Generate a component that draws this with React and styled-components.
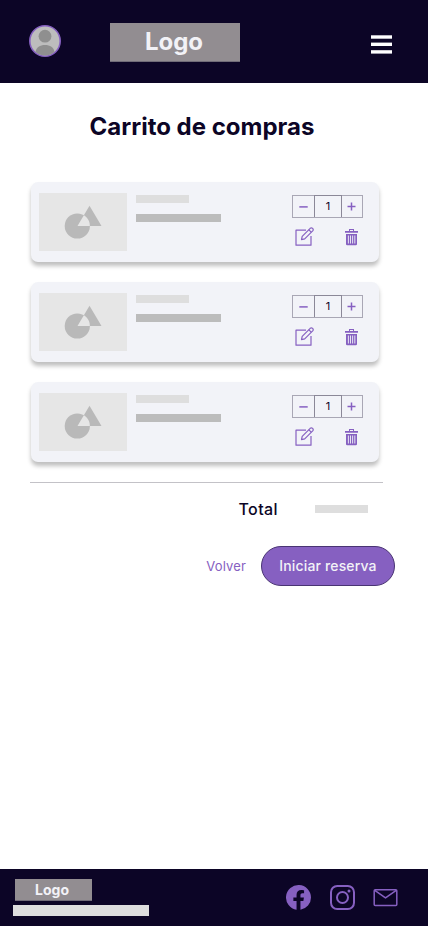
import React from "react";
import styled, { createGlobalStyle } from "styled-components";

const ink = "#0c0526";
const violet = "#8660c1";

const GlobalStyle = createGlobalStyle`
  *, *::before, *::after { box-sizing: border-box; }
  body { margin: 0; background: #fff; font-family: Inter, "Liberation Sans", sans-serif; }
  button { font-family: inherit; cursor: pointer; }
  svg { display: block; }
`;

const Page = styled.div`
  width: 428px;
  height: 926px;
  display: flex;
  flex-direction: column;
  background: #fff;
  color: ${ink};
  overflow: hidden;
`;

const Header = styled.header`
  height: 83px;
  flex: none;
  display: flex;
  align-items: flex-start;
  background: ${ink};
`;

const Avatar = styled.div`
  width: 32px;
  height: 32px;
  margin: 25px 49px 0 29px;
`;

const Logo = styled.div`
  width: ${(p) => (p.$small ? 77 : 130)}px;
  height: ${(p) => (p.$small ? 22 : 39)}px;
  margin: ${(p) => (p.$small ? "0 0 4px 2px" : "23px 131px 0 0")};
  padding-right: ${(p) => (p.$small ? 3 : 2)}px;
  display: flex;
  align-items: center;
  justify-content: center;
  background: #928d91;
  border-bottom: 1px solid #716c78;
  color: #f2f2f7;
  font-size: ${(p) => (p.$small ? 14 : 24)}px;
  line-height: 1;
  font-weight: 700;
`;

const MenuButton = styled.button`
  width: 21px;
  height: 19px;
  margin: 35px 0 0;
  padding: 0;
  border: 0;
  background: none;
`;

const Title = styled.h1`
  margin: 28px 0 40px;
  padding-right: 24px;
  height: 31px;
  font-size: 24px;
  line-height: 31px;
  font-weight: 700;
  text-align: center;
`;

const Main = styled.main`
  flex: 1;
`;

const CartList = styled.section`
  display: flex;
  flex-direction: column;
  gap: 20px;
  margin: 0 49px 20px 31px;
`;

const Card = styled.article`
  height: 80px;
  display: flex;
  align-items: flex-start;
  padding: 11px 16px 0 8px;
  border-radius: 7px;
  background: #f2f3f8;
  box-shadow: 0 4px 4px rgba(0, 0, 0, 0.25);
`;

const Thumbnail = styled.div`
  width: 88px;
  height: 58px;
  background: #e6e6e6;
`;

const Details = styled.div`
  flex: 1;
  display: flex;
  flex-direction: column;
  gap: 11px;
  padding: 2px 0 0 9px;
`;

const Bar = styled.div`
  width: ${(p) => p.$width}px;
  height: ${(p) => p.$height || 8}px;
  background: ${(p) => (p.$dark ? "#bcbcbc" : "#dedede")};
`;

const Actions = styled.div`
  width: 71px;
  padding-top: 2px;
`;

const Stepper = styled.div`
  height: 23px;
  display: grid;
  grid-template-columns: 22px 28px 21px;
  border: solid #a9a7b5;
  border-width: 1px 0;
`;

const StepButton = styled.button`
  display: flex;
  align-items: center;
  justify-content: center;
  padding: ${(p) => (p.$end ? "0 1px 1px 0" : "0")};
  border: solid #a9a7b5;
  border-width: ${(p) => (p.$end ? "0 1px 0 0" : "0 0 0 1px")};
  background: none;
`;

const Quantity = styled.output`
  margin-top: -1px;
  display: flex;
  align-items: center;
  justify-content: center;
  border: solid #8b8898;
  border-width: 1px 1px 0;
  font-size: 11px;
  line-height: 1;
`;

const ItemTools = styled.div`
  display: flex;
  justify-content: space-between;
  padding: 9px 5px 0 3px;
`;

const ToolButton = styled.button`
  padding: ${(p) => p.$top || 0}px 0 0;
  border: 0;
  background: none;
  display: flex;
  align-items: flex-start;
`;

const TotalRow = styled.div`
  display: flex;
  align-items: center;
  justify-content: flex-end;
  gap: 37px;
  width: 353px;
  height: 54px;
  margin-left: 30px;
  padding: 0 15px 2px 0;
  border-top: 1px solid #c3c2c7;
  font-size: 16px;
  font-weight: 450;
  letter-spacing: 0.4px;
`;

const Buttons = styled.div`
  display: flex;
  align-items: center;
  justify-content: flex-end;
  gap: 15px;
  padding: 10px 33px 0 0;
`;

const BackButton = styled.button`
  padding: 0;
  border: 0;
  background: none;
  color: ${violet};
  font-size: 13px;
  letter-spacing: 0.15px;
`;

const PrimaryButton = styled.button`
  width: 134px;
  height: 40px;
  padding: 0 0 1px;
  border: 1px solid #493473;
  border-radius: 20px;
  background: ${violet};
  color: #f2f2f7;
  font-size: 14px;
  font-weight: 450;
  letter-spacing: 0.15px;
`;

const Footer = styled.footer`
  height: 57px;
  flex: none;
  display: flex;
  justify-content: space-between;
  padding: 10px 30px 0 13px;
  background: ${ink};
`;

const Social = styled.div`
  display: flex;
  align-items: flex-start;
  padding-top: 6px;
  gap: 18px;
`;

const AvatarIcon = () => (
  <svg width="32" height="32" viewBox="0 0 32 32">
    <defs>
      <clipPath id="avatarClip"><circle cx="16" cy="16" r="14.5" /></clipPath>
    </defs>
    <circle cx="16" cy="16" r="15.2" fill="#bdbdbd" stroke={violet} strokeWidth="1.6" />
    <g fill="#8f8f8f" clipPath="url(#avatarClip)">
      <circle cx="16" cy="11.2" r="6.4" />
      <path d="M6.5 27C7 22.5 11 20 16 20s9 2.500 9.500 7l-3 5h-13z" />
    </g>
  </svg>
);

const MenuIcon = () => (
  <svg width="21" height="19" viewBox="0 0 21 19" fill="#fff">
    <rect y="0.300" width="21" height="3.400" />
    <rect y="7.600" width="21" height="3.400" />
    <rect y="15.200" width="21" height="3.400" />
  </svg>
);

const ShapesIcon = () => (
  <svg width="88" height="58" viewBox="0 0 88 58">
    <defs>
      <clipPath id="discClip"><circle cx="38.300" cy="33" r="12.600" /></clipPath>
    </defs>
    <circle cx="38.300" cy="33" r="12.600" fill="#b9b9b9" />
    <path d="M50.500 12.800L62.500 33H38.500z" fill="#b9b9b9" />
    <path d="M50.500 12.800L62.500 33H38.500z" fill="#e6e6e6" clipPath="url(#discClip)" />
  </svg>
);

const StepIcon = ({ plus }) => (
  <svg width="9" height="9" viewBox="0 0 9 9" stroke={violet} strokeWidth="1.500">
    <path d={plus ? "M0.500 4.500h8M4.500 0.500v8" : "M0.300 4.900h8.400"} />
  </svg>
);

const EditIcon = () => (
  <svg width="20" height="20" viewBox="0 0 20 20" fill="none" stroke={violet} strokeWidth="1.200" strokeLinejoin="round">
    <path d="M11 3.200H1v15h15V9" />
    <path d="M6.500 12.600l.700-3.300 8-8q1.200-1.100 2.400.100t.100 2.400l-8 8z" />
    <path d="M13.700 2.700l2.500 2.500" />
  </svg>
);

const TrashIcon = () => (
  <svg width="13" height="17" viewBox="0 0 13 17" fill={violet}>
    <path d="M4 2V0h5v2h4v1.800H0V2zm1 0h3V1H5z" />
    <path fillRule="evenodd" d="M1 5h11v10q0 1.200-1.200 1.200H2.200Q1 16.200 1 15zm1.900 1.600v7.800h.900V6.600zm2.100 0v7.800h.900V6.600zm2.200 0v7.800h.900V6.600zm2.200 0v7.800h.900V6.600z" />
  </svg>
);

const FacebookIcon = () => (
  <svg width="25" height="25" viewBox="0 0 25 25">
    <path fill={violet} d="M25 12.500a12.500 12.500 0 1 0-14.450 12.350v-8.740H7.370V12.500h3.180V9.750c0-3.130 1.860-4.870 4.720-4.870 1.370 0 2.800.250 2.800.250v3.070h-1.580c-1.550 0-2.040.970-2.040 1.960v2.340h3.470l-.560 3.610h-2.910v8.740A12.500 12.500 0 0 0 25 12.500z" />
  </svg>
);

const InstagramIcon = () => (
  <svg width="26" height="25" viewBox="0 0 26 25" fill="none" stroke={violet} strokeWidth="2">
    <rect x="2" y="1" width="23" height="23" rx="6.200" />
    <circle cx="13.500" cy="12.500" r="5.500" />
    <circle cx="20" cy="6" r="1.500" fill={violet} stroke="none" />
  </svg>
);

const MailIcon = () => (
  <svg width="25" height="25" viewBox="0 0 25 25" fill="none" stroke={violet} strokeWidth="1.500" strokeLinejoin="round">
    <rect x="1.200" y="4.800" width="22.600" height="15.800" rx="1" />
    <path d="M1.800 5.300l10.700 7.600 10.700-7.600" />
  </svg>
);

const items = [1, 2, 3];

function CartItem() {
  return (
    <Card>
      <Thumbnail><ShapesIcon /></Thumbnail>
      <Details>
        <Bar $width={53} />
        <Bar $width={85} $dark />
      </Details>
      <Actions>
        <Stepper>
          <StepButton aria-label="Restar"><StepIcon /></StepButton>
          <Quantity>1</Quantity>
          <StepButton $end aria-label="Sumar"><StepIcon plus /></StepButton>
        </Stepper>
        <ItemTools>
          <ToolButton aria-label="Editar"><EditIcon /></ToolButton>
          <ToolButton $top={2} aria-label="Eliminar"><TrashIcon /></ToolButton>
        </ItemTools>
      </Actions>
    </Card>
  );
}

export default function App() {
  return (
    <>
      <GlobalStyle />
      <Page>
        <Header>
          <Avatar><AvatarIcon /></Avatar>
          <Logo>Logo</Logo>
          <MenuButton aria-label="Menú"><MenuIcon /></MenuButton>
        </Header>
        <Main>
          <Title>Carrito de compras</Title>
          <CartList>
            {items.map((id) => <CartItem key={id} />)}
          </CartList>
          <TotalRow>
            <span>Total</span>
            <Bar $width={53} />
          </TotalRow>
          <Buttons>
            <BackButton>Volver</BackButton>
            <PrimaryButton>Iniciar reserva</PrimaryButton>
          </Buttons>
        </Main>
        <Footer>
          <div>
            <Logo $small>Logo</Logo>
            <Bar $width={136} $height={11} />
          </div>
          <Social>
            <FacebookIcon />
            <InstagramIcon />
            <MailIcon />
          </Social>
        </Footer>
      </Page>
    </>
  );
}
